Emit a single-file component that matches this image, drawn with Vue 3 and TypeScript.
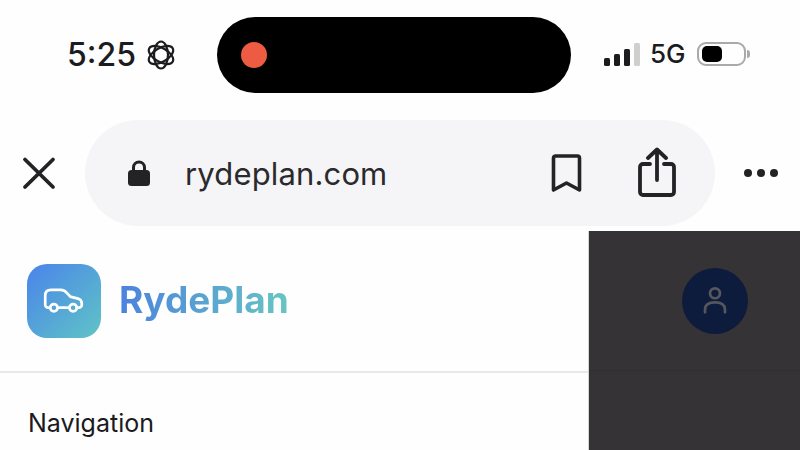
<script setup lang="ts">
const time: string = '5:25'
const url: string = 'rydeplan.com'
const bars = [
  { h: 8, on: true },
  { h: 12, on: true },
  { h: 17, on: true },
  { h: 23, on: false }
]
</script>

<template>
  <div class="screen">
    <header class="status">
      <div class="status-left">
        <span class="time">{{ time }}</span>
        <svg class="focus" width="30" height="30" viewBox="0 0 30 30" fill="none" stroke="#1c1c1e" stroke-width="2.2">
          <ellipse cx="15" cy="15" rx="13.500" ry="7" transform="rotate(30 15 15)" />
          <ellipse cx="15" cy="15" rx="13.500" ry="7" transform="rotate(90 15 15)" />
          <ellipse cx="15" cy="15" rx="13.500" ry="7" transform="rotate(150 15 15)" />
        </svg>
      </div>
      <div class="island"><span class="rec"></span></div>
      <div class="status-right">
        <div class="signal">
          <span
            v-for="(b, i) in bars"
            :key="i"
            class="bar"
            :class="{ off: !b.on }"
            :style="{ height: b.h + 'px' }"
          ></span>
        </div>
        <span class="net">5G</span>
        <div class="battery"><span class="level"></span></div>
        <span class="tip"></span>
      </div>
    </header>

    <div class="browser">
      <svg class="close" width="34" height="34" viewBox="0 0 34 34" fill="none" stroke="#232326" stroke-width="3.8" stroke-linecap="round">
        <path d="M3 3.500 L31 31 M31 3.500 L3 31" />
      </svg>
      <div class="address">
        <svg class="lock" width="22" height="26" viewBox="0 0 22 26">
          <path d="M5.500 11 V7.500 a5.500 5.500 0 0 1 11 0 V11" fill="none" stroke="#232326" stroke-width="3" />
          <rect x="0" y="10" width="22" height="16" rx="3.500" fill="#232326" />
        </svg>
        <span class="url">{{ url }}</span>
        <svg class="bookmark" width="31" height="38" viewBox="0 0 31 38" fill="none" stroke="#232326" stroke-width="3.600" stroke-linejoin="round">
          <path d="M2.500 36 V4 a2 2 0 0 1 2 -2 H26.500 a2 2 0 0 1 2 2 V36 L15.500 29 Z" />
        </svg>
        <svg class="share" width="38" height="50" viewBox="0 0 38 50" fill="none" stroke="#232326" stroke-width="3.800" stroke-linecap="round" stroke-linejoin="round">
          <path d="M12 17 H5 a3 3 0 0 0 -3 3 V45 a3 3 0 0 0 3 3 H33 a3 3 0 0 0 3 -3 V20 a3 3 0 0 0 -3 -3 H26" />
          <path d="M19 33 V3 M10 11 L19 2.500 L28 11" />
        </svg>
      </div>
      <div class="more"><i></i><i></i><i></i></div>
    </div>

    <main class="page">
      <aside class="sidebar">
        <div class="brand">
          <div class="logo">
            <svg class="car" width="41" height="25" viewBox="0 0 42 26" fill="none" stroke="#fff" stroke-width="2.800" stroke-linecap="round" stroke-linejoin="round">
              <path d="M7 20.500 H5 a3 3 0 0 1 -3 -3 V8 C2 4 4 2 8 2 H18 C21 2 23 3 25 5.500 L28 9 L36 11 C39 12 40 13.500 40 16 V17.500 a3 3 0 0 1 -3 3 H35" />
              <path d="M15 20.500 H27" />
              <circle cx="11" cy="20.500" r="3.800" />
              <circle cx="31" cy="20.500" r="3.800" />
            </svg>
          </div>
          <span class="name">RydePlan</span>
        </div>
        <h2 class="nav-title">Navigation</h2>
      </aside>
      <section class="overlay">
        <div class="overlay-head">
          <div class="avatar">
            <svg width="24" height="29" viewBox="0 0 26 32" fill="none" stroke="#56575c" stroke-width="3" stroke-linecap="round">
              <circle cx="13" cy="8" r="5.500" />
              <path d="M2 29 V26 C2 20 7 18 13 18 C19 18 24 20 24 26 V29" />
            </svg>
          </div>
        </div>
      </section>
    </main>
  </div>
</template>

<style>
html, body { margin: 0; background: #fff; overflow: hidden; }
</style>

<style scoped>
.screen {
  width: 800px;
  height: 450px;
  overflow: hidden;
  display: flex;
  flex-direction: column;
  font-family: Inter, "Liberation Sans", sans-serif;
  background: #fefefe;
  color: #1c1c1e;
}
.status {
  display: flex;
  align-items: center;
  height: 110px;
  padding: 17px 0;
  box-sizing: border-box;
  flex: none;
}
.status-left {
  width: 217px;
  flex: none;
  box-sizing: border-box;
  padding-left: 67px;
  display: flex;
  align-items: center;
  gap: 11px;
  margin-bottom: 1px;
}
.time { font-size: 32px; font-weight: 500; line-height: 1; }
.focus { flex: none; margin-left: -1px; }
.island {
  width: 354px;
  height: 76px;
  flex: none;
  border-radius: 38px;
  background: #000;
  display: flex;
  align-items: center;
  padding-left: 24px;
  box-sizing: border-box;
}
.rec { width: 26px; height: 26px; border-radius: 50%; background: #ee5b43; }
.status-right {
  display: flex;
  align-items: center;
  padding-left: 33px;
  margin-bottom: 2px;
}
.signal { display: flex; align-items: flex-end; gap: 4px; height: 23px; }
.bar { width: 6px; background: #1c1c1e; border-radius: 1.5px; }
.bar.off { background: #cfcfcf; }
.net { font-size: 26px; font-weight: 500; line-height: 1; margin-left: 10px; margin-right: 11px; }
.battery {
  width: 49px;
  height: 24px;
  box-sizing: border-box;
  border: 2px solid #a9a9a9;
  border-radius: 9px;
  padding: 2px 3px;
  display: flex;
}
.level { width: 20px; background: #000; border-radius: 5px; }
.tip {
  width: 3px;
  height: 8px;
  margin-left: 1px;
  background: #a9a9a9;
  border-radius: 0 3px 3px 0;
}
.browser {
  flex: none;
  height: 121px;
  box-sizing: border-box;
  padding: 10px 0 5px 22px;
  display: flex;
  align-items: center;
}
.close { flex: none; margin-right: 29px; }
.address {
  width: 630px;
  height: 106px;
  flex: none;
  border-radius: 53px;
  background: #f5f5f7;
  display: flex;
  align-items: center;
  box-sizing: border-box;
  padding-left: 43px;
}
.lock { flex: none; margin-right: 35px; }
.url { font-size: 31px; letter-spacing: 0.15px; color: #2a2a2d; width: 366px; flex: none; }
.bookmark { flex: none; margin-right: 56px; }
.share { flex: none; margin-top: -3px; }
.more { display: flex; gap: 5px; margin-left: 29px; }
.more i { width: 8px; height: 8px; border-radius: 50%; background: #232326; }
.page { flex: 1; display: flex; min-height: 0; }
.sidebar {
  width: 589px;
  flex: none;
  box-sizing: border-box;
  border-right: 1px solid #d4d4d8;
  background: #fefefe;
}
.brand {
  height: 142px;
  box-sizing: border-box;
  border-bottom: 2px solid #e9e9ec;
  display: flex;
  align-items: center;
  padding: 0 0 0 27px;
  gap: 18px;
}
.logo {
  width: 74px;
  height: 74px;
  border-radius: 20px;
  background: linear-gradient(135deg, #4a84ea, #5fc4c6);
  display: flex;
  align-items: center;
  justify-content: center;
}
.car { margin-left: -2px; margin-top: -1px; }
.name {
  font-size: 37px;
  font-weight: 700;
  line-height: 44px;
  margin-top: -2px;
  background: linear-gradient(90deg, #4c82de, #66c6c2);
  -webkit-background-clip: text;
  background-clip: text;
  color: transparent;
}
.nav-title {
  margin: 0;
  padding: 35px 0 0 28px;
  font-size: 25px;
  line-height: 30px;
  font-weight: 400;
  color: #1a1a1f;
}
.overlay { flex: 1; background: #353335; }
.overlay-head {
  height: 140px;
  box-sizing: border-box;
  border-bottom: 1px solid #302e30;
  display: flex;
  align-items: center;
  padding-left: 93px;
}
.avatar {
  width: 66px;
  height: 66px;
  border-radius: 50%;
  background: #0d1b3c;
  display: flex;
  align-items: center;
  justify-content: center;
}
</style>
